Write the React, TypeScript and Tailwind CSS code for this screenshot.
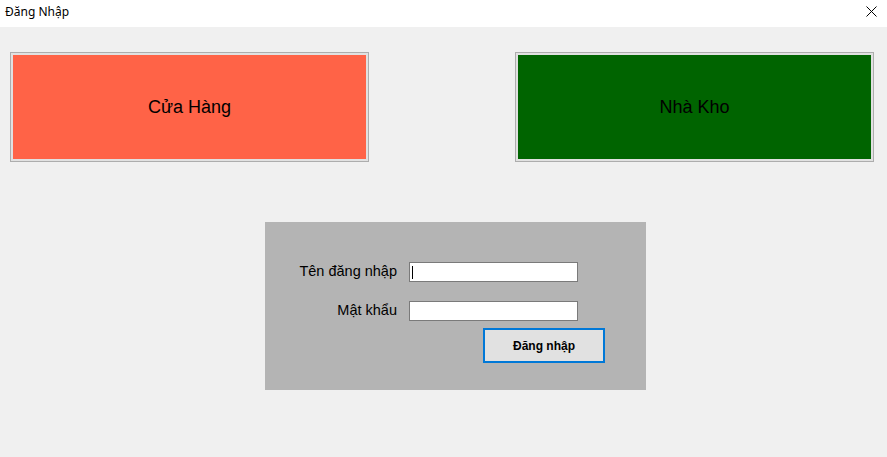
export default function App() {
    return (
        <div className="w-[887px] h-[457px] bg-[#f0f0f0] flex flex-col font-['Liberation_Sans',Arial,sans-serif] text-black overflow-hidden">
            <div className="h-[27px] bg-white flex items-center justify-between pl-[5px] pr-[10px] shrink-0">
                <div className="text-[12px] font-['Noto_Sans',sans-serif] leading-none -mt-[3px]">Đăng Nhập</div>
                <svg width="11" height="11" viewBox="0 0 11 11" className="-mt-[5px]">
                    <path d="M0.5 0.5 L10.5 10.5 M10.5 0.5 L0.5 10.5" stroke="#000" strokeWidth="1" />
                </svg>
            </div>

            <div className="flex pl-[10px] gap-[146px] mt-[25px]">
                <div className="w-[359px] h-[110px] border border-[#adadad] p-[2px] bg-[#e1e1e1]">
                    <div className="w-full h-full bg-[#ff6347] flex items-center justify-center text-[18px]">
                        Cửa Hàng
                    </div>
                </div>
                <div className="w-[359px] h-[110px] border border-[#adadad] p-[2px] bg-[#e1e1e1]">
                    <div className="w-full h-full bg-[#006400] flex items-center justify-center text-[18px]">
                        Nhà Kho
                    </div>
                </div>
            </div>

            <div className="ml-[265px] mt-[60px] w-[381px] h-[168px] bg-[#b4b4b4] pt-[40px]">
                <div className="flex items-center h-[20px]">
                    <div className="w-[132px] text-right text-[14.5px] leading-none -mt-[2px]">Tên đăng nhập</div>
                    <div className="ml-[12px] w-[169px] h-[20px] border border-[#7a7a7a] bg-white flex items-center pl-[2px]">
                        <div className="w-px h-[13px] bg-black"></div>
                    </div>
                </div>
                <div className="flex items-center h-[20px] mt-[19px]">
                    <div className="w-[132px] text-right text-[14.5px] leading-none -mt-[2px]">Mật khẩu</div>
                    <div className="ml-[12px] w-[169px] h-[20px] border border-[#7a7a7a] bg-white"></div>
                </div>
                <div className="ml-[218px] mt-[7px] w-[122px] h-[35px] border-2 border-[#0078d7] bg-[#e1e1e1] flex items-center justify-center text-[12px] font-bold">
                    Đăng nhập
                </div>
            </div>
        </div>
    );
}
